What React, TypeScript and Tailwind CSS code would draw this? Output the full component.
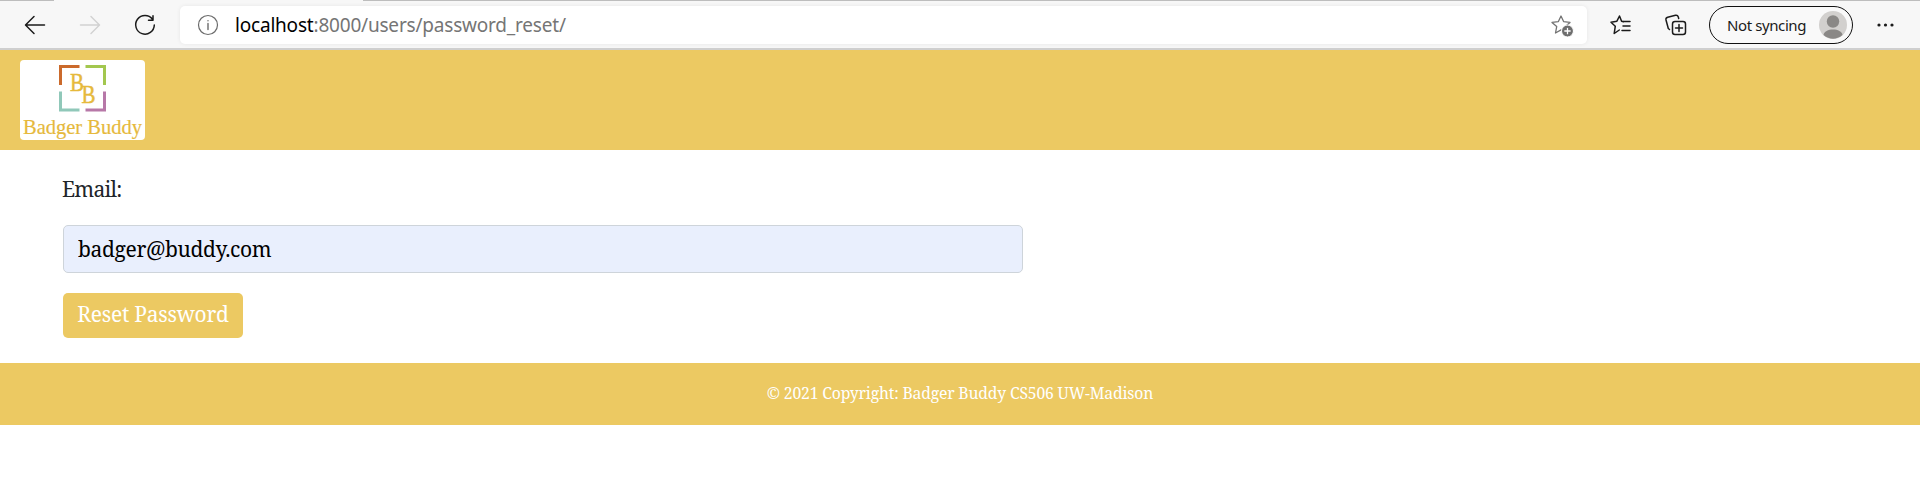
import type { ReactNode } from "react";

function Icon({ size = 24, className = "", children }: { size?: number; className?: string; children: ReactNode }) {
  return (
    <svg
      width={size}
      height={size}
      viewBox={`0 0 ${size} ${size}`}
      fill="none"
      stroke="currentColor"
      strokeWidth="1.5"
      strokeLinecap="round"
      strokeLinejoin="round"
      className={`shrink-0 ${className}`}
    >
      {children}
    </svg>
  );
}

const STAR = "M10 2 L12.6 7.6 L19 8.4 L14.3 12.6 L15.5 19 L10 15.9 L4.5 19 L5.7 12.6 L1 8.4 L7.4 7.6 Z";

function Toolbar() {
  return (
    <div className="flex h-[50px] flex-col border-b-2 border-[#cfcfcf] bg-[#f7f7f7] font-['Noto_Sans',sans-serif]">
      <div className="flex h-px justify-between">
        <div className="w-[54px] bg-[#bdbdbd]" />
        <div className="w-[1557px] bg-[#bdbdbd]" />
      </div>
      <div className="flex h-[47px] items-center">
        <Icon className="ml-[23px] text-[#1b1b1b]">
          <path d="M21.5 12H3M11 3.500L2.500 12L11 20.500" />
        </Icon>
        <Icon className="ml-[31px] text-[#d2d2d2]">
          <path d="M2.500 12H21M13 3.500L21.500 12L13 20.500" />
        </Icon>
        <Icon className="ml-[31px] text-[#1b1b1b]">
          <path d="M19.500 6.300A9.300 9.300 0 1 0 21.300 12M20 2.800V7.200H15.500" />
        </Icon>
        <div className="ml-[23px] flex h-[38px] w-[1407px] items-center rounded-[5px] bg-white shadow-[0_0_4px_rgba(0,0,0,0.07)]">
          <Icon className="ml-[16px] text-[#6b6b6b]">
            <circle cx="12" cy="12" r="9.500" strokeWidth="1.200" />
            <path d="M12 10.500V16.500M12 7.600V7.800" strokeWidth="1.400" />
          </Icon>
          <div className="ml-[15px] whitespace-pre text-[19px] leading-[26px] tracking-[-0.2px] text-[#757575]">
            <span className="text-black">localhost</span>:8000/users/password_reset/
          </div>
          <Icon className="mr-[12px] ml-auto text-[#737373]">
            <path d={STAR} transform="translate(0 1)" strokeWidth="1.300" />
            <circle cx="16.500" cy="18" r="6" fill="#6e6e6e" stroke="white" strokeWidth="1" />
            <path d="M16.500 15.300V20.700M13.800 18H19.200" stroke="white" strokeWidth="1.300" />
          </Icon>
        </div>
        <Icon className="ml-[22px] text-[#1b1b1b]">
          <path d="M14.500 8.700L12.600 8.200L10.500 3L7.900 8.200L2 9.200L6.300 13.200L5.200 20.500L10.300 17M14 8.500H21M14 13H21M13 17.500H21" />
        </Icon>
        <Icon className="ml-[31px] text-[#1b1b1b]">
          <rect x="8.500" y="8.500" width="13" height="13" rx="2.500" />
          <path d="M15 11.500V18.500M11.500 15H18.500M5.500 16.500L4.300 15.500L2 7Q1.500 4.800 3.700 4.200L11.500 2.300Q13.700 1.900 14.300 4L14.700 5.500" />
        </Icon>
        <div className="ml-[21px] flex h-[38px] w-[144px] items-center rounded-full border-[1.5px] border-[#111] bg-[#f9f9f9]">
          <span className="ml-[17px] text-[15px] leading-5 tracking-[-0.4px] whitespace-nowrap text-[#1b1b1b]">Not syncing</span>
          <svg width="28" height="28" viewBox="0 0 28 28" className="mr-[5px] ml-auto shrink-0">
            <circle cx="14" cy="14" r="14" fill="#d2d0ce" />
            <circle cx="14" cy="10.500" r="6.200" fill="#8a8886" />
            <path d="M4.500 24C5 16.500 23 16.500 23.500 24Q14 31.500 4.500 24Z" fill="#8a8886" />
          </svg>
        </div>
        <svg width="18" height="4" viewBox="0 0 18 4" className="ml-[24px]" fill="#1b1b1b">
          <circle cx="2" cy="2" r="1.600" />
          <circle cx="8.500" cy="2" r="1.600" />
          <circle cx="15" cy="2" r="1.600" />
        </svg>
      </div>
    </div>
  );
}

function Logo() {
  return (
    <svg width="125" height="80" viewBox="0 0 125 80" className="rounded-[4px] bg-white" fill="none" strokeWidth="3">
      <path d="M59.500 6.500H40.500V25" stroke="#cb6a2c" />
      <path d="M65.500 6.500H84.500V25" stroke="#a3c74f" />
      <path d="M40.500 31.500V50H59.500" stroke="#90c8b9" />
      <path d="M84.500 31.500V50H65.500" stroke="#b778a8" />
      <g fill="#e6b93c" stroke="#e6b93c" strokeWidth="0.500" fontFamily="'Liberation Serif', serif">
        <text x="50" y="31" fontSize="26" textLength="14" lengthAdjust="spacingAndGlyphs">B</text>
        <text x="61.500" y="42.500" fontSize="26" textLength="14" lengthAdjust="spacingAndGlyphs">B</text>
        <text x="3" y="74" fontSize="21" strokeWidth="0.200" textLength="119" lengthAdjust="spacingAndGlyphs">Badger Buddy</text>
      </g>
    </svg>
  );
}

export default function App() {
  return (
    <div className="min-h-[495px] w-full bg-white font-['Noto_Serif','Liberation_Serif',serif]">
      <Toolbar />
      <header className="flex h-[100px] items-center bg-[#ecc962] pl-5">
        <Logo />
      </header>
      <main className="flex h-[213px] flex-col items-start pt-[24px] pl-[63px]">
        <label htmlFor="email" className="-ml-px text-[21px] leading-[30px] tracking-[-0.75px] text-[#212529]">Email:</label>
        <input
          id="email"
          type="email"
          defaultValue="badger@buddy.com"
          className="mt-[21px] h-[48px] w-[960px] rounded-[5px] border border-[#ced4da] bg-[#e9effd] pr-[15px] pb-px pl-[14px] text-[21px] tracking-[-0.35px] text-black outline-none"
        />
        <button className="mt-[20px] h-[45px] w-[180px] rounded-[5px] bg-[#ecc962] pb-px text-[21px] tracking-[-0.25px] whitespace-nowrap text-white">
          Reset Password
        </button>
      </main>
      <footer className="flex h-[62px] items-center justify-center bg-[#ecc962] text-[15.75px] tracking-[-0.18px] text-white">
        © 2021 Copyright: Badger Buddy CS506 UW-Madison
      </footer>
    </div>
  );
}
